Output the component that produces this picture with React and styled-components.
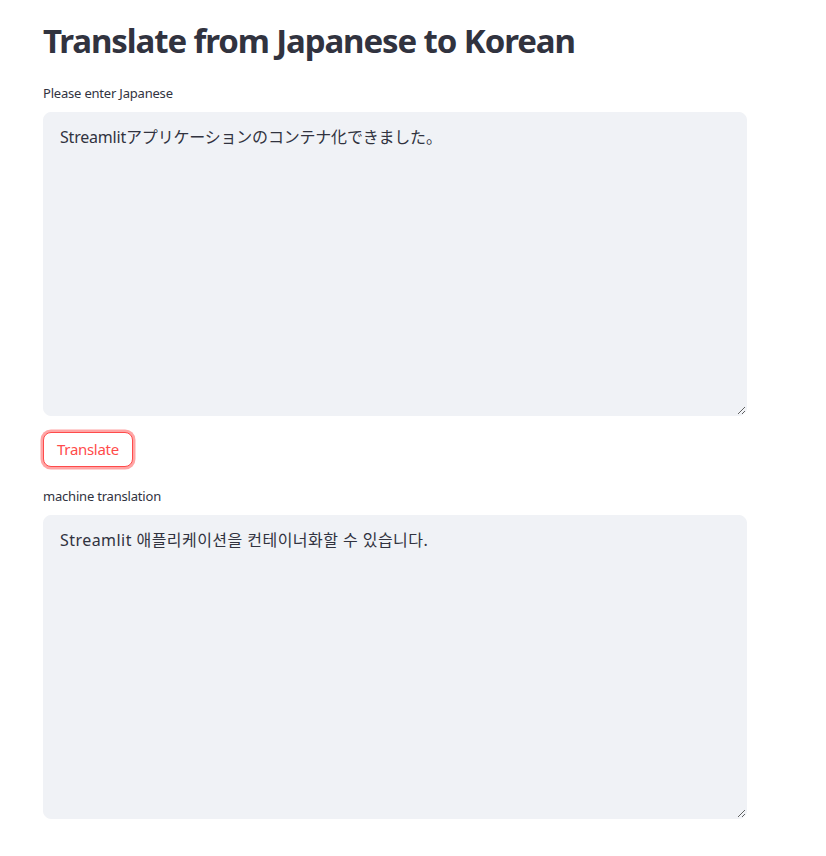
import React from 'react';
import styled, { createGlobalStyle } from 'styled-components';

const GlobalStyle = createGlobalStyle`
    html, body {
        margin: 0;
        background: #ffffff;
    }
    body {
        font-family: "Noto Sans", "Noto Sans CJK JP", "Noto Sans CJK KR", sans-serif;
        color: rgb(49, 51, 63);
    }
`;

const Main = styled.div`
    width: 704px;
    padding: 21px 0 0 43px;
    display: flex;
    flex-direction: column;
`;

const Title = styled.h1`
    margin: 0 0 23px;
    font-size: 33px;
    font-weight: 700;
    line-height: 1.2;
    color: rgb(49, 51, 63);
    letter-spacing: -1.1px;
`;

const Label = styled.label`
    display: block;
    font-size: 13px;
    line-height: 18px;
    margin-bottom: 10px;
    color: rgb(49, 51, 63);
    letter-spacing: -0.2px;
`;

const TextArea = styled.textarea`
    box-sizing: border-box;
    width: 704px;
    height: 304px;
    padding: 12px 16px;
    border: 1px solid #f0f2f6;
    border-radius: 8px;
    background: #f0f2f6;
    font-family: "Noto Sans", ${p => (p.$lang === 'ko' ? '"Noto Sans CJK KR"' : '"Noto Sans CJK JP"')}, sans-serif;
    font-size: 16px;
    line-height: 1.6;
    color: rgb(49, 51, 63);
    letter-spacing: ${p => (p.$lang === 'ko' ? '0.45px' : '-0.2px')};
    resize: vertical;
    outline: none;
`;

const Button = styled.button`
    align-self: flex-start;
    margin: 16px 0 20px;
    height: 35px;
    padding: 0 13px;
    border: 1px solid #ff4b4b;
    border-radius: 8px;
    background: #ffffff;
    color: #ff4b4b;
    font-family: "Noto Sans", sans-serif;
    font-size: 15px;
    letter-spacing: -0.3px;
    box-shadow: 0 0 0 2.5px rgba(255, 75, 75, 0.5);
    cursor: pointer;
`;

export default function App() {
    return (
        <>
            <GlobalStyle />
            <Main>
                <Title>Translate from Japanese to Korean</Title>
                <Label>Please enter Japanese</Label>
                <TextArea $lang="ja" defaultValue="Streamlitアプリケーションのコンテナ化できました。" />
                <Button>Translate</Button>
                <Label>machine translation</Label>
                <TextArea $lang="ko" defaultValue="Streamlit 애플리케이션을 컨테이너화할 수 있습니다." />
            </Main>
        </>
    );
}
